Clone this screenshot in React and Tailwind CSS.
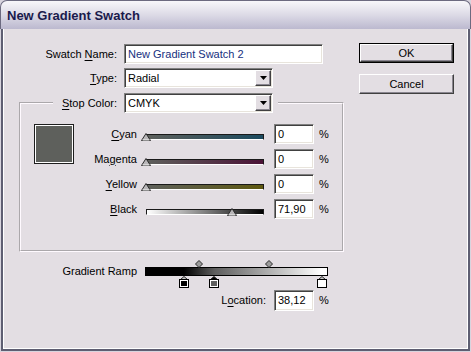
import React from "react";

const sunken =
  "bg-white border border-t-[#808080] border-l-[#808080] border-b-white border-r-white shadow-[inset_1px_1px_0_#404040,inset_-1px_-1px_0_#e8e4dc]";
const raised =
  "border border-t-white border-l-white border-b-[#404040] border-r-[#404040] shadow-[inset_-1px_-1px_0_#8a8690] bg-[#e3dee3]";

function Mn({ children }) {
  return <span className="underline decoration-1 underline-offset-[2px]">{children}</span>;
}

function Field({ value, className = "", tone = "text-black" }) {
  return (
    <div className={`${sunken} h-[20px] flex items-center pl-[3px] ${className}`}>
      <span className={tone}>{value}</span>
    </div>
  );
}

function Dropdown({ value }) {
  return (
    <div className={`${sunken} w-[149px] h-[20px] flex items-center pl-[3px] pr-[1px]`}>
      <span className="flex-1">{value}</span>
      <span className={`${raised} w-[16px] h-[16px] flex items-center justify-center`}>
        <svg width="7" height="4" viewBox="0 0 7 4">
          <path d="M0 0H7L3.5 4Z" fill="#000" />
        </svg>
      </span>
    </div>
  );
}

function Thumb() {
  return (
    <svg width="10" height="8" viewBox="0 0 10 8">
      <path d="M5 0.5L9.5 7.5H0.5Z" fill="#b8b6b8" stroke="#2a2a2a" />
      <path d="M1.5 7H8.5" stroke="#f4f4f4" />
    </svg>
  );
}

function Slider({ label, from, to, value, tail }) {
  return (
    <div className="flex items-center h-[20px]">
      <div className="w-[63px] text-right">{label}</div>
      <div className="relative w-[122px] h-[20px] ml-[7px] pt-[10px]">
        <div
          className="mx-[2px] h-[6px] border border-t-[#1a1a1a] border-l-[#1a1a1a] border-b-white border-r-[#1a1a1a]"
          style={{ background: `linear-gradient(to right, ${from}, ${to})` }}
        />
        <div className="absolute top-[9px]" style={{ left: `${value * 1.19 - 3}px` }}>
          <Thumb />
        </div>
      </div>
      <Field value={tail} className="w-[40px] ml-[8px]" />
      <span className="ml-[5px]">%</span>
    </div>
  );
}

function Diamond() {
  return (
    <svg width="8" height="8" viewBox="0 0 8 8">
      <path d="M4 0.5L7.5 4L4 7.5L0.5 4Z" fill="#9c9c9c" stroke="#2a2a2a" />
    </svg>
  );
}

function Stop({ color, active }) {
  return (
    <svg width="10" height="12" viewBox="0 0 10 12">
      <path d="M5 0.5L8.5 3.5H1.5Z" fill={active ? "#000" : "#c8c8c8"} stroke="#222" />
      <rect x="0.5" y="3.5" width="9" height="8" fill="#fff" stroke="#000" />
      <rect x="2" y="5" width="6" height="5" fill={color} />
    </svg>
  );
}

export default function App() {
  return (
    <div className="w-[471px] h-[352px] flex flex-col bg-[#d8d4de] text-[11px] leading-none text-black [font-family:'Liberation_Sans',Arial,sans-serif]">
      <div className="h-[29px] shrink-0 rounded-t-[7px] border border-b-0 border-[#6c6a80] bg-gradient-to-b from-[#f8f7fb] via-[#dcdae6] to-[#bcb9cf] flex items-center pl-[6px]">
        <span className="text-[13px] font-bold text-[#1a1a4c]">New Gradient Swatch</span>
      </div>
      <div className="flex-1 px-[1px] pb-[1px]">
        <div className="h-full border-2 border-t-0 border-[#5e5e72]">
          <div className="h-full border border-t-0 border-white bg-[#e3dee3] flex pl-[1px]">
            <div className="w-[354px] pt-[15px]">
              <div className="flex items-center h-[20px]">
                <div className="w-[112px] text-right">
                  Swatch <Mn>N</Mn>ame:
                </div>
                <Field value="New Gradient Swatch 2" tone="text-[#16307e]" className="w-[199px] ml-[7px]" />
              </div>
              <div className="flex items-center h-[20px] mt-[4px]">
                <div className="w-[112px] text-right">
                  <Mn>T</Mn>ype:
                </div>
                <div className="ml-[7px]">
                  <Dropdown value="Radial" />
                </div>
              </div>

              <fieldset className="mt-[5px] ml-[14px] w-[325px] border-2 [border-style:groove] border-[#fffaff] pb-[31px] min-w-0">
                <legend className="ml-[32px] px-[5px]">
                  <div className="flex items-center h-[20px]">
                    <div className="w-[59px] text-right">
                      <Mn>S</Mn>top Color:
                    </div>
                    <div className="ml-[7px]">
                      <Dropdown value="CMYK" />
                    </div>
                  </div>
                </legend>
                <div className="flex items-start mt-[11px]">
                  <div className="ml-[13px] w-[40px] h-[40px] border border-[#1e1e1e] bg-white p-[1px]">
                    <div className="w-full h-full bg-[#5e605c]" />
                  </div>
                  <div className="flex flex-col gap-[5px]">
                    <Slider label={<><Mn>C</Mn>yan</>} from="#5e605c" to="#1b4a5f" value={0} tail="0" />
                    <Slider label={<>Ma<Mn>g</Mn>enta</>} from="#5e605c" to="#4a1236" value={0} tail="0" />
                    <Slider label={<><Mn>Y</Mn>ellow</>} from="#5e605c" to="#5e5810" value={0} tail="0" />
                    <Slider label={<><Mn>B</Mn>lack</>} from="#ffffff" to="#000000" value={71.9} tail="71,90" />
                  </div>
                </div>
              </fieldset>

              <div className="flex items-start mt-[8px]">
                <div className="w-[132px] text-right pt-[6px]">Gradient Ramp</div>
                <div className="relative w-[183px] h-[29px] ml-[8px] pt-[7px]">
                  <div className="h-[9px] border border-black bg-[linear-gradient(to_right,#000_0%,#000_21%,#5e5e5e_38%,#fff_97%,#fff_100%)]" />
                  <div className="absolute top-0 left-[50px]">
                    <Diamond />
                  </div>
                  <div className="absolute top-0 left-[120px]">
                    <Diamond />
                  </div>
                  <div className="absolute top-[16px] left-[34px]">
                    <Stop color="#000" />
                  </div>
                  <div className="absolute top-[16px] left-[64px]">
                    <Stop color="#5e5e5e" active />
                  </div>
                  <div className="absolute top-[16px] left-[172px]">
                    <Stop color="#fff" />
                  </div>
                </div>
              </div>

              <div className="flex items-center h-[21px] mt-[1px]">
                <div className="w-[261px] text-right">
                  L<Mn>o</Mn>cation:
                </div>
                <Field value="38,12" className="w-[40px] h-[21px] ml-[8px]" />
                <span className="ml-[5px]">%</span>
              </div>
            </div>

            <div className="w-[95px] pt-[14px] flex flex-col">
              <div className="border border-black">
                <div className={`${raised} h-[18px] flex items-center justify-center`}>OK</div>
              </div>
              <div className={`${raised} h-[20px] mt-[11px] flex items-center justify-center`}>Cancel</div>
            </div>
          </div>
        </div>
      </div>
    </div>
  );
}
